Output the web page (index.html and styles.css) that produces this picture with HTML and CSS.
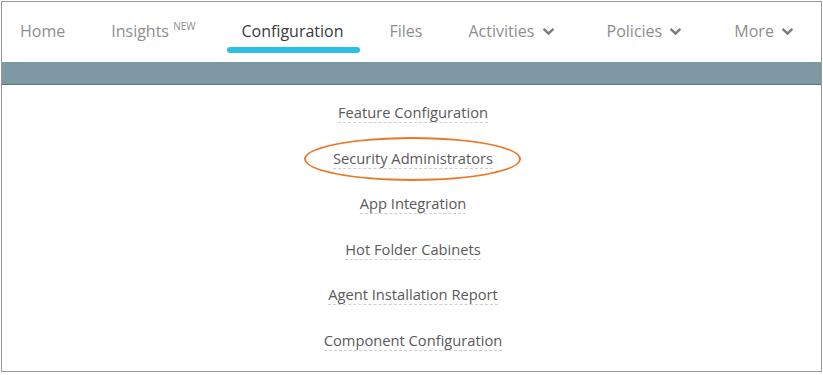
FILE: index.html
```html
<!DOCTYPE html>
<html>
<head>
  <meta charset="UTF-8">
  <meta name="viewport" content="width=device-width, initial-scale=1.0">
  <title>Configuration</title>
  <link rel="stylesheet" href="styles.css">
</head>
<body>
  <div class="frame">
    <nav class="tabs">
      <a class="tab" href="#">Home</a>
      <a class="tab" href="#">Insights <span class="new">NEW</span></a>
      <a class="tab active" href="#">Configuration</a>
      <a class="tab" href="#">Files</a>
      <a class="tab" href="#">Activities
        <svg class="chev" viewBox="0 0 12 8"><path d="M1.5 1.5 L6 6 L10.5 1.5" /></svg>
      </a>
      <a class="tab" href="#">Policies
        <svg class="chev" viewBox="0 0 12 8"><path d="M1.5 1.5 L6 6 L10.5 1.5" /></svg>
      </a>
      <a class="tab" href="#">More
        <svg class="chev" viewBox="0 0 12 8"><path d="M1.5 1.5 L6 6 L10.5 1.5" /></svg>
      </a>
    </nav>
    <div class="bar"></div>

    <ul class="menu">
      <li><a href="#">Feature Configuration</a></li>
      <li class="circled"><a href="#">Security Administrators</a></li>
      <li><a href="#">App Integration</a></li>
      <li><a href="#">Hot Folder Cabinets</a></li>
      <li><a href="#">Agent Installation Report</a></li>
      <li><a href="#">Component Configuration</a></li>
    </ul>
  </div>
</body>
</html>
```

FILE: styles.css
```css
body {
  margin: 0;
  padding: 1px 1px 0 1px;
  background: #fff;
  font-family: 'Open Sans', 'Noto Sans', sans-serif;
  color: #555;
}

.frame {
  border: 1px solid #999;
  height: 371px;
  box-sizing: border-box;
  box-shadow: 0 1px 0 #ddd;
  overflow: hidden;
}

.tabs {
  display: flex;
  align-items: flex-start;
  gap: 46px;
  height: 60px;
  padding-left: 18px;
  box-sizing: border-box;
  padding-top: 17px;
}

.tab {
  position: relative;
  font-size: 16px;
  line-height: 24px;
  color: #8e8e8e;
  text-decoration: none;
  white-space: nowrap;
}

.tab.active {
  color: #3a3a3a;
}

.tab.active::after {
  content: "";
  position: absolute;
  left: -14px;
  right: -16px;
  top: 28px;
  height: 6px;
  border-radius: 3px;
  background: #2bbfe3;
}

.new {
  font-size: 10px;
  line-height: 0;
  vertical-align: 7px;
}

.chev {
  width: 13px;
  height: 9px;
  margin-left: 3px;
  margin-right: 6px;
  vertical-align: 1px;
}

.chev path {
  fill: none;
  stroke: #7a7a7a;
  stroke-width: 2.2;
}

.bar {
  height: 22px;
  background: #7e98a4;
  border-bottom: 1px solid #5f7782;
}

.menu {
  list-style: none;
  margin: 0;
  padding: 16px 0 0 3px;
  text-align: center;
}

.menu li {
  height: 45.5px;
}

.menu a {
  font-size: 14.7px;
  line-height: 22px;
  color: #5a5a5a;
  text-decoration: none;
  border-bottom: 1px dashed #cfcfcf;
}

.circled {
  position: relative;
}

.circled::before {
  content: "";
  position: absolute;
  left: 50%;
  top: -10px;
  width: 213px;
  height: 40px;
  margin-left: -109.5px;
  border: 2.5px solid #e8792b;
  border-radius: 50%;
}
```
